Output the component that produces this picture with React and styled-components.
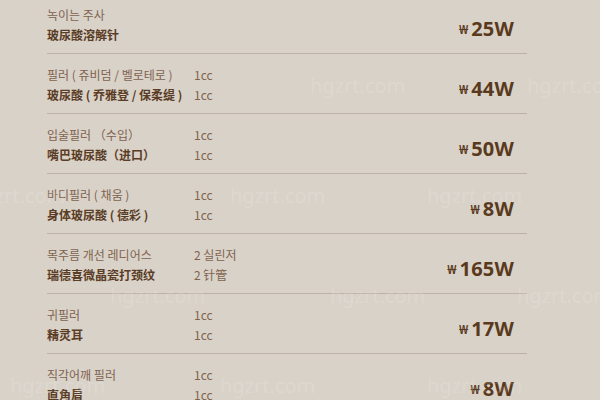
import React from 'react';
import styled, { createGlobalStyle } from 'styled-components';

const GlobalStyle = createGlobalStyle`
  html, body {
    margin: 0;
    padding: 0;
    background: #d9d2c9;
  }
  body {
    width: 600px;
    height: 400px;
    overflow: hidden;
    font-family: "Noto Sans CJK KR", "Noto Sans CJK SC", "Noto Sans", sans-serif;
  }
`;

const Page = styled.div`
  position: relative;
  width: 600px;
  height: 400px;
  overflow: hidden;
  background: #d9d2c9;
`;

const List = styled.div`
  width: 480px;
  margin: -6px 0 0 47px;
  display: flex;
  flex-direction: column;
`;

const Row = styled.div`
  box-sizing: border-box;
  height: 60px;
  padding-top: 10px;
  border-bottom: 1px solid #bcb2a5;
  display: flex;
  align-items: flex-start;
`;

const Lines = styled.div`
  flex: 1;
  display: grid;
  grid-template-columns: 147px 1fr;
  grid-auto-rows: 20px;
  align-items: center;
  font-size: 12px;
`;

const Name = styled.span`
  color: ${p => (p.$strong ? '#5b3d25' : '#80634e')};
  font-weight: ${p => (p.$strong ? 600 : 400)};
  white-space: pre;
`;

const Price = styled.div`
  display: flex;
  align-items: center;
  gap: 3px;
  height: 30px;
  margin-top: 9px;
  padding-right: 13px;
  color: #5a3a1d;
  font-family: "Noto Sans", "Open Sans", sans-serif;
  font-weight: 700;
`;

const Won = styled.span`
  font-size: 13px;
  font-weight: 600;
  padding-top: 2px;
`;

const Amount = styled.span`
  font-size: 20px;
  letter-spacing: 0.2px;
`;

const Mark = styled.span`
  position: absolute;
  font-family: "Noto Sans", sans-serif;
  font-size: 20px;
  color: rgba(255, 255, 255, 0.15);
  white-space: nowrap;
  pointer-events: none;
`;

const rows = [
  { ko: '녹이는 주사', zh: '玻尿酸溶解针', a: '', b: '', price: '25W' },
  { ko: '필러 ( 쥬비덤 / 벨로테로 )', zh: '玻尿酸 ( 乔雅登 / 保柔缇 )', a: '1cc', b: '1cc', price: '44W' },
  { ko: '입술필러 （수입）', zh: '嘴巴玻尿酸（进口）', a: '1cc', b: '1cc', price: '50W' },
  { ko: '바디필러 ( 채움 )', zh: '身体玻尿酸 ( 德彩 )', a: '1cc', b: '1cc', price: '8W' },
  { ko: '목주름 개선 레디어스', zh: '瑞德喜微晶瓷打颈纹', a: '2 실린저', b: '2 针管', price: '165W' },
  { ko: '귀필러', zh: '精灵耳', a: '1cc', b: '1cc', price: '17W' },
  { ko: '직각어깨 필러', zh: '直角肩', a: '1cc', b: '1cc', price: '8W' },
];

const marks = [
  [310, 72], [527, 72], [-30, 182], [230, 182], [427, 182],
  [110, 282], [330, 282], [517, 282], [10, 372], [220, 372], [427, 372],
];

export default function App() {
  return (
    <Page>
      <GlobalStyle />
      <List>
        {rows.map((r, i) => (
          <Row key={i}>
            <Lines>
              <Name>{r.ko}</Name>
              <Name>{r.a}</Name>
              <Name $strong>{r.zh}</Name>
              <Name>{r.b}</Name>
            </Lines>
            <Price>
              <Won>₩</Won>
              <Amount>{r.price}</Amount>
            </Price>
          </Row>
        ))}
      </List>
      {marks.map(([x, y], i) => (
        <Mark key={i} style={{ left: x, top: y }}>hgzrt.com</Mark>
      ))}
    </Page>
  );
}
